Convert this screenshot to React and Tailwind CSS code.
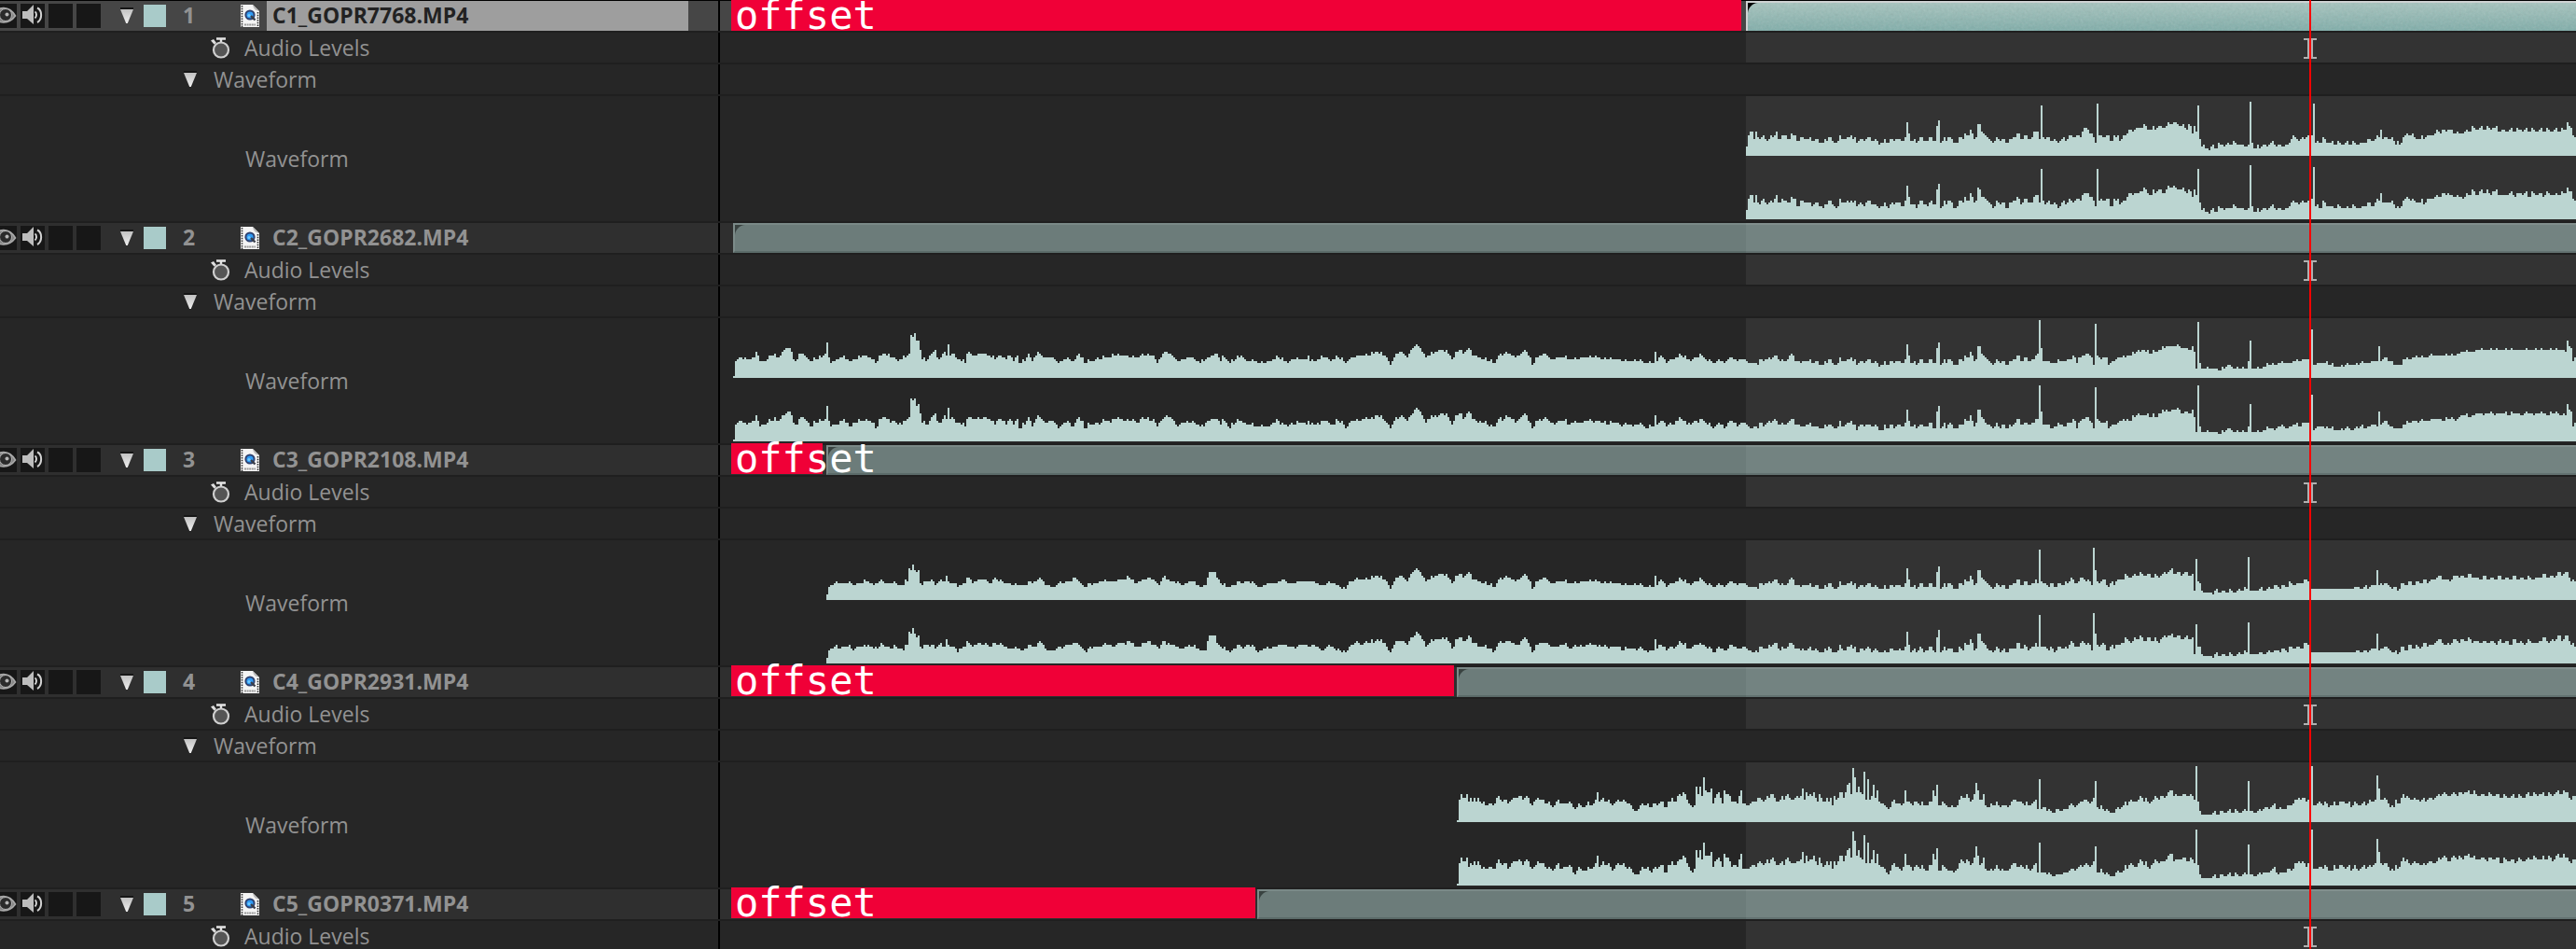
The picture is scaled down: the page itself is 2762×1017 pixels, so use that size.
import React from "react";

/* Envelopes are "column:height" pairs; a column is 2px wide, a height unit is 2px. */
const TAKE_A =
  "0:1 1:9 3:11 5:10 8:10 11:11 12:14 13:12 14:9 17:9 20:12 24:11 27:15 29:16 30:16 31:14 32:10 33:9 36:13 38:12 41:9 45:10 48:12 49:13 50:19 51:11 52:8 54:9 58:11 62:9 65:10 70:12 74:10 76:8 80:13 84:11 88:9 92:11 94:13 95:23 96:22 97:24 98:20 99:20 100:15 101:10 103:9 107:14 108:15 109:11 110:10 113:14 114:12 115:18 116:12 117:13 119:11 122:9 124:8 125:13 130:12 134:13 140:10 142:12 146:10 148:12 150:9 152:12 153:8 156:9 158:13 160:9 163:14 166:11 170:11 174:8 178:10 182:9 185:13 188:8 192:9 200:11 205:12 215:11 220:12 225:12 227:8 230:13 231:14 235:12 238:9 245:11 250:8 255:11 259:13 261:9 262:12 266:8 272:12 275:9 285:8 290:10 292:11 297:8 300:10 307:10 308:12 309:9 312:9 316:11 320:9 324:11 328:8 332:11 337:12 341:12 345:14 350:11 352:7 355:13 358:14 361:11 364:16 366:18 368:16 371:11 375:13 379:15 383:13 385:10 389:15 391:13 394:16 396:12 402:10 408:8 410:12 415:13 419:11 422:13 424:15 427:11 428:7 431:11 435:13 438:10 443:11 450:10 460:11 468:10 480:9 485:9 490:8 493:8 494:14 495:9 497:12 500:8 504:10 508:12 513:9 519:12 522:9 526:8 528:10 531:8 534:11 538:9 542:10";

const TAKE_A_INTRO = "0:9 5:8 10:10 15:12 20:9 23:12 25:12 26:9 30:9";

const TAKE_A_TAIL =
  "154:10 156:13 157:31 158:16 159:9 163:8 170:9 174:10 175:12 176:11 177:8 179:11 182:13 185:11 186:7 187:29 188:12 190:10 193:11 194:7 198:10 205:12 213:15 216:13 220:14 226:17 230:17 234:16 238:15 239:17 240:14 241:5 242:30 243:8 244:5 250:5 254:4 259:7 261:5 268:5 269:9 270:20 271:5 275:5 280:7 290:8 301:10 302:10 303:26 304:7 310:8 316:6 325:7 333:8 338:9 339:17 340:9 342:11 347:7 351:7 352:10 370:12 380:12 383:14 400:15 415:15 430:15 438:15 439:14 440:20 441:17 442:16 443:9 444:11 480:14 700:13";

const COMMON =
  "0:5 1:11 2:13 3:13 4:9 5:13 6:10 8:10 9:11 10:9 12:9 15:11 16:13 17:9 18:9 19:11 20:11 22:9 23:9 24:12 25:11 26:11 27:8 30:10 32:9 37:9 41:7 44:10 47:7 49:8 50:11 53:9 55:10 56:11 57:9 60:8 65:10 68:8 72:7 80:9 83:8 85:10 86:18 87:12 88:8 92:8 93:10 97:8 99:10 101:8 102:16 103:19 104:7 108:10 113:7 115:10 118:11 119:11 120:14 121:12 122:9 123:10 124:17 125:17 126:13 127:12 128:11 130:9 133:8 134:10 140:7 143:10 145:12 147:9 150:11 152:9 155:13 156:13 157:9 158:27 159:10 161:10 164:8 172:9 174:11 178:11 179:10 180:13 181:15 183:14 185:12 186:10 187:7 188:28 189:11 193:11 195:8 199:11 200:8 203:11 205:14 210:15 213:17 214:16 216:14 221:16 223:15 227:17 229:18 231:17 235:15 238:16 239:12 240:16 241:13 242:27 243:9 244:5 247:4 255:6 262:7 266:6 269:6 270:29 271:7 272:4 276:5 281:7 285:6 290:6 292:9 294:10 297:9 300:10 303:11 304:28 305:7 310:9 312:7 330:7 333:9 337:9 339:10 340:14 341:9 343:10 347:8 350:6 352:10 354:12 356:11 360:9 365:11 369:12 371:13 376:14 380:12 385:13 390:15 400:15 405:14 415:14 439:14 440:18 441:16 442:15 443:11 445:11 480:14 700:13";

const TAKE_B =
  "0:3 1:7 3:8 6:9 10:9 14:8 18:9 21:10 25:8 28:10 32:9 41:8 42:11 43:10 44:17 45:16 46:19 47:16 48:15 49:16 50:9 51:8 56:11 58:8 62:10 63:10 64:13 65:10 70:7 74:9 75:12 78:9 82:11 88:9 90:12 92:10 100:8 106:8 112:10 114:12 117:8 122:7 126:9 134:11 138:7 144:9 148:10 155:10 160:11 161:13 165:9 170:11 175:11 178:8 180:12 185:10 190:8 195:10 200:7 203:8 204:12 206:15 208:15 209:12 212:8 215:7 225:10 232:7 240:9 243:10 250:9 257:10 265:8 272:9 276:6 278:6 280:10 285:11 288:11";

const TAKE_B_TAIL =
  "154:9 155:11 156:9 157:27 158:10 161:8 172:9 174:12 176:9 180:12 183:11 185:8 186:28 187:16 188:10 192:11 194:7 198:10 204:13 212:14 220:13 227:16 234:14 239:14 240:5 241:22 242:10 244:5 249:4 255:5 260:5 268:6 269:23 270:5 275:6 285:7 292:9 301:10 302:9 303:6 304:6 305:6 306:6 307:6 308:6 309:6 310:6 311:6 312:6 313:6 314:6 315:6 316:6 317:6 318:6 319:6 320:6 321:6 322:6 323:6 324:6 325:6 326:7 331:7 337:8 338:16 339:8 342:9 347:7 349:5 351:9 366:10 370:12 378:11 381:13 400:12 420:12 438:14 440:15 442:10 444:10 480:12 800:12";

const TAKE_C =
  "0:1 1:12 2:15 4:13 5:15 6:11 7:13 10:11 11:13 13:10 17:10 19:9 21:13 25:12 28:11 31:13 33:14 36:13 37:14 40:9 43:13 46:12 50:9 52:9 54:12 57:10 60:11 62:8 66:9 73:10 74:12 75:16 76:11 78:13 82:10 85:11 89:12 92:10 94:7 97:7 99:10 103:8 109:11 112:8 115:13 117:11 119:15 122:15 124:10 126:8 127:9 128:19 129:15 130:19 131:14 132:24 133:17 134:16 136:18 137:10 139:15 140:16 142:10 143:17 145:15 148:11 150:10 151:14 152:17 153:10 155:9 158:11 161:13 165:12 168:15 172:11 176:14 180:12 184:14 185:18 186:12 187:16 190:14 191:16 193:11 194:15 197:11 200:13 201:9 202:14 203:12 205:16 207:13 209:20 210:21 211:15 212:29 213:24 214:16 215:19 217:15 218:27 219:12 220:23 221:12 222:14 223:20 224:13 225:17 226:11 228:10 230:8 231:7 234:12 238:9 239:10 240:17 241:11 243:10 246:11 250:9 254:11 255:17 256:14 257:20 258:9 260:11 262:9 266:8 268:9 269:12 273:15 275:11 277:15 278:21 279:17 280:12 281:12 282:15 283:9 285:8 286:10 292:9 295:8 297:11 299:12 302:11 306:9 310:12 311:7 312:23 313:7 315:8 318:6 326:7 328:9 332:9 334:11 336:12 339:10 341:13 342:22 343:8 348:7 350:5 353:7 357:9 360:11 365:12 367:13 370:11 375:13 380:14 382:17 383:17 384:14 390:15 394:14 395:12 396:30 397:11 398:6 401:4 405:5 407:4 410:6 423:6 424:22 425:6 429:6 432:7 437:9 442:7 446:9 451:13 456:12 457:12 458:30 459:9 462:11 468:9 475:11 480:9 482:10 488:10 492:12 493:25 494:18 495:12 497:13 499:10 502:8 503:12 505:10 507:15 510:13 515:12 520:12 525:14 528:15 535:15 540:16 550:15 565:14 580:15 595:16 597:12 599:14 850:13";

function expand(text, seed) {
  const points = text.split(" ").map((p) => p.split(":").map(Number));
  const out = [];
  for (let i = 0; i < points.length; i++) {
    const [c, h] = points[i];
    out.push(h);
    const next = points[i + 1];
    if (!next) break;
    for (let k = c + 1; k < next[0]; k++) {
      const mid = h + ((next[1] - h) * (k - c)) / (next[0] - c);
      const r = ((k * 7919 + seed * 104729) ^ (k * k * 31)) & 7;
      out.push(Math.round(mid) + (r === 0 || r === 3 ? 1 : r === 1 || r === 5 ? -1 : 0));
    }
  }
  return out;
}

const common = expand(COMMON, 1);
const takeA = [
  ...expand(TAKE_A, 2),
  ...expand(TAKE_A_INTRO, 3),
  ...common.slice(31, 154),
  ...expand(TAKE_A_TAIL, 6),
];
const takeB = [
  ...expand(TAKE_B, 4),
  ...takeA.slice(339, 697).map((h) => (h > 6 ? h - 1 : h)),
  ...expand(TAKE_B_TAIL, 7),
];
const takeC = expand(TAKE_C, 5);

const LAYERS = [
  { id: 1, name: "C1_GOPR7768.MP4", start: "w-[1100px]", offset: "-top-px w-[1083px]", wave: common, selected: true },
  { id: 2, name: "C2_GOPR2682.MP4", start: "w-[14px]", wave: takeA },
  { id: 3, name: "C3_GOPR2108.MP4", start: "w-[114px]", offset: "-top-[2px] w-[98px]", wave: takeB },
  { id: 4, name: "C4_GOPR2931.MP4", start: "w-[790px]", offset: "-top-[2px] w-[775px]", wave: takeC },
  { id: 5, name: "C5_GOPR0371.MP4", start: "w-[576px]", offset: "-top-[2px] w-[562px]" },
];

function Triangle() {
  return (
    <svg width="14" height="18" viewBox="0 0 14 18" aria-hidden="true">
      <defs>
        <linearGradient id="tri" x1="0" y1="0" x2="0" y2="1">
          <stop offset="0" stopColor="#c2c2c2" />
          <stop offset="1" stopColor="#efefef" />
        </linearGradient>
      </defs>
      <rect width="14" height="2" fill="#161616" />
      <path d="M0 2h14L7.8 17H6.2z" fill="url(#tri)" />
    </svg>
  );
}

function Eye() {
  return (
    <svg width="18" height="26" viewBox="0 0 18 26" aria-hidden="true">
      <path d="M-8 12C-2 2 10 2 16.500 13 10 22-2 22-8 14z" fill="#858585" stroke="#a8a8a8" strokeWidth="1.6" />
      <circle cx="6" cy="12" r="6.500" fill="#2b2b2b" stroke="#b4b4b4" strokeWidth="1" />
      <circle cx="7.500" cy="11.500" r="2" fill="#b5b5b5" />
    </svg>
  );
}

function Speaker() {
  return (
    <svg width="26" height="26" viewBox="0 0 26 26" aria-hidden="true">
      <path d="M2 8h5l7-7v21l-7-6H2z" fill="#bdbdbd" />
      <path d="M15.500 8.500c2 1 2 5.500 0 7" fill="none" stroke="#e0e0e0" strokeWidth="1.8" />
      <path d="M18 4.500c5.500 2.500 5.500 12.500 0 15.500" fill="none" stroke="#d2d2d2" strokeWidth="2" />
    </svg>
  );
}

function Stopwatch() {
  return (
    <svg width="21" height="25" viewBox="0 0 21 25" aria-hidden="true">
      <path d="M6 2.500h10M11 2.500v5" stroke="#e4e4e4" strokeWidth="2.4" fill="none" />
      <path d="M0 4.500l3-1.500 3 4-2.500 1.500z" fill="#dedede" />
      <circle cx="11" cy="14.500" r="8" fill="#555" stroke="#cfcfcf" strokeWidth="2.2" />
    </svg>
  );
}

function ClipFile() {
  return (
    <svg width="20" height="26" viewBox="0 0 20 26" aria-hidden="true">
      <path d="M0 1h13l7 7v17H0z" fill="#f4f4f4" />
      <path d="M13 1l7 7c-3-1-6-1-7-7z" fill="#bcbcbc" />
      <path d="M1.500 2v23" stroke="#2a2a2a" strokeWidth="1.6" strokeDasharray="1.500 1.200" />
      <path d="M18.500 9v16" stroke="#2a2a2a" strokeWidth="1.6" strokeDasharray="1.500 1.200" />
      <circle cx="10" cy="12" r="4.600" fill="#2f9bf5" stroke="#2f4270" strokeWidth="2" />
      <path d="M11 13l4.500 4.500" stroke="#3a3f4a" strokeWidth="2.400" />
      <circle cx="9" cy="12.500" r="1.600" fill="#6fcaff" />
      <path d="M4 22.500h12" stroke="#9a9a9a" strokeWidth="2" strokeDasharray="2 .6" />
    </svg>
  );
}

function Channel({ data, trim, tall }) {
  const height = tall ? 68 : 64;
  let d = `M0 ${height}`;
  data.forEach((h, k) => {
    const v = Math.max(1, trim && h > 6 && (k * 13) % 7 < 2 ? h - 1 : h);
    d += `V${height - v * 2}H${k * 2 + 2}`;
  });
  d += `V${height}z`;
  return (
    <svg
      className="block shrink-0"
      width={data.length * 2}
      height={height}
      shapeRendering="crispEdges"
      aria-hidden="true"
    >
      <path d={d} fill="#bbd5d1" />
    </svg>
  );
}

function WorkArea({ tone }) {
  return <div className={`absolute inset-y-0 left-[1100px] right-0 ${tone}`} />;
}

function Row({ tall, tone, header, children }) {
  return (
    <div className={`flex border-b-2 border-[#1f1f1f] ${tall ? "h-[136px]" : "h-[34px]"} ${tone}`}>
      <div className="flex w-[772px] shrink-0 items-center border-r-2 border-black">{header}</div>
      <div className="relative flex min-w-0 grow">{children}</div>
    </div>
  );
}

function CornerNotch({ selected }) {
  return (
    <svg className="block" width="11" height="11" viewBox="0 0 11 11" aria-hidden="true">
      <path d="M0 0H11C5 .5.5 5 0 11z" fill={selected ? "#000" : "#394240"} />
    </svg>
  );
}

function Grain() {
  return (
    <svg className="absolute inset-0 h-full w-full opacity-20" aria-hidden="true">
      <filter id="grain">
        <feTurbulence type="fractalNoise" baseFrequency="0.35" numOctaves="2" seed="4" />
        <feColorMatrix type="saturate" values="0" />
      </filter>
      <rect width="100%" height="100%" filter="url(#grain)" />
    </svg>
  );
}

function Clip({ start, selected }) {
  return (
    <>
      <div className={`shrink-0 ${start}`} />
      <div
        className={`relative min-w-0 grow overflow-hidden border-l-2 border-t-2 ${
          selected
            ? "border-[#ced2d2] bg-linear-to-b from-[#a6c4be] to-[#7fada9]"
            : "border-b-2 border-b-[#5b6b69] border-l-[#7c8b89] border-t-[#7a8987] bg-[#6c7c7a]"
        }`}
      >
        {selected && <Grain />}
        <div className="relative">
          <CornerNotch selected={selected} />
        </div>
      </div>
    </>
  );
}

function TimeMarker() {
  return (
    <svg className="absolute left-[1698px] top-[6px]" width="14" height="22" viewBox="0 0 14 22" shapeRendering="crispEdges" aria-hidden="true">
      <path d="M0 0h14v2h-4v18h4v2H0v-2h4V2H0z" fill="#b0b0b0" />
    </svg>
  );
}

function LayerHeader({ layer }) {
  return (
    <div className="flex h-full w-full items-center">
      <div className="flex w-[129px] items-center gap-1">
        <button aria-label="Toggle video" className="h-[26px] w-[18px] bg-[#171717]"><Eye /></button>
        <button aria-label="Toggle audio" className="h-[26px] w-[26px] bg-[#171717]"><Speaker /></button>
        <button aria-label="Solo" className="h-[26px] w-[26px] bg-[#171717]" />
        <button aria-label="Lock" className="h-[26px] w-[26px] bg-[#171717]" />
      </div>
      <button aria-label="Collapse layer" className="w-[25px]"><Triangle /></button>
      <button aria-label="Label colour" className="h-6 w-6 bg-[#a9cbc9]" />
      <span className="w-20 pb-[2px] pl-[18px] text-[23px] font-bold">{layer.id}</span>
      <span className="w-7"><ClipFile /></span>
      <span
        className={`flex h-full w-[452px] items-center pb-[2px] pl-[6px] text-[23px] font-bold ${
          layer.selected ? "bg-[#9e9e9e] text-[#222222]" : ""
        }`}
      >
        {layer.name}
      </span>
    </div>
  );
}

function Layer({ layer }) {
  return (
    <section aria-label={layer.name}>
      <Row tone={layer.selected ? "bg-[#464646]" : "bg-[#2f2f2f]"} header={<LayerHeader layer={layer} />}>
        <Clip start={layer.start} selected={layer.selected} />
        {!layer.selected && <WorkArea tone="bg-white/5" />}
        {layer.offset && (
          <div
            className={`absolute left-[12px] flex h-[33px] items-center whitespace-nowrap bg-[#f00037] pl-1 font-['DejaVu_Sans_Mono',monospace] text-[42px] leading-[33px] text-white ${layer.offset}`}
          >
            offset
          </div>
        )}
      </Row>
      <Row
        tone="bg-[#262626]"
        header={
          <>
            <button aria-label="Animate audio levels" className="ml-[226px] w-9"><Stopwatch /></button>
            Audio Levels
          </>
        }
      >
        <WorkArea tone="bg-[#333333]" />
        <TimeMarker />
      </Row>
      {layer.wave && (
        <>
          <Row
            tone="bg-[#262626]"
            header={
              <>
                <button aria-label="Collapse waveform" className="ml-[197px] w-8"><Triangle /></button>
                Waveform
              </>
            }
          />
          <Row tall tone="bg-[#262626]" header={<span className="pl-[263px]">Waveform</span>}>
            <WorkArea tone="bg-[#333333]" />
            <div className={`shrink-0 ${layer.start}`} />
            <div className="relative min-w-0 grow overflow-hidden border-b-2 border-[#262626]">
              <Channel data={layer.wave} />
              <Channel data={layer.wave} tall trim />
            </div>
          </Row>
        </>
      )}
    </section>
  );
}

export default function App() {
  return (
    <main className="relative h-screen overflow-hidden bg-[#262626] pt-px font-['Open_Sans',sans-serif] text-[23px] leading-none text-[#929292]">
      <div className="absolute inset-x-0 top-0 h-px bg-black" />
      {LAYERS.map((layer) => (
        <Layer key={layer.id} layer={layer} />
      ))}
      <div className="absolute inset-y-0 left-[2476px] w-[2px] bg-[#fa0000]" />
    </main>
  );
}
